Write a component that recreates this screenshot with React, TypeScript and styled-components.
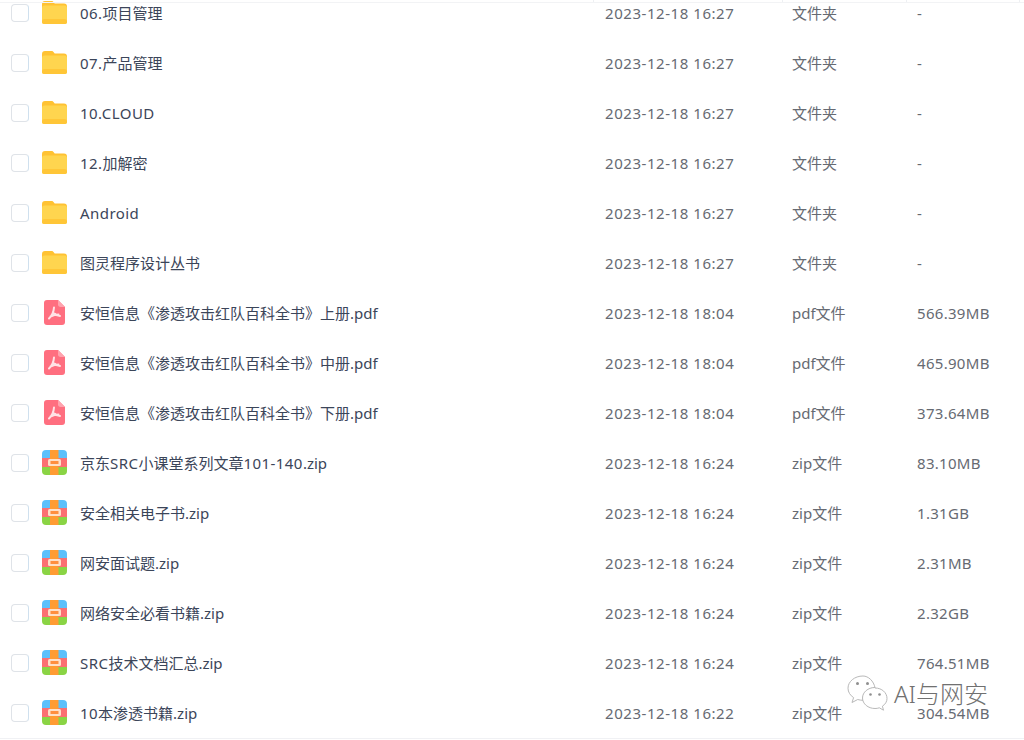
import * as React from "react";
import styled, { createGlobalStyle } from "styled-components";

interface IFileRow {
  name: string;
  date: string;
  kind: "folder" | "pdf" | "zip";
  size: string;
}

const folderDate = "2023-12-18 16:27";
const pdfDate = "2023-12-18 18:04";
const zipDate = "2023-12-18 16:24";

const files: IFileRow[] = [
  { name: "06.项目管理", date: folderDate, kind: "folder", size: "-" },
  { name: "07.产品管理", date: folderDate, kind: "folder", size: "-" },
  { name: "10.CLOUD", date: folderDate, kind: "folder", size: "-" },
  { name: "12.加解密", date: folderDate, kind: "folder", size: "-" },
  { name: "Android", date: folderDate, kind: "folder", size: "-" },
  { name: "图灵程序设计丛书", date: folderDate, kind: "folder", size: "-" },
  { name: "安恒信息《渗透攻击红队百科全书》上册.pdf", date: pdfDate, kind: "pdf", size: "566.39MB" },
  { name: "安恒信息《渗透攻击红队百科全书》中册.pdf", date: pdfDate, kind: "pdf", size: "465.90MB" },
  { name: "安恒信息《渗透攻击红队百科全书》下册.pdf", date: pdfDate, kind: "pdf", size: "373.64MB" },
  { name: "京东SRC小课堂系列文章101-140.zip", date: zipDate, kind: "zip", size: "83.10MB" },
  { name: "安全相关电子书.zip", date: zipDate, kind: "zip", size: "1.31GB" },
  { name: "网安面试题.zip", date: zipDate, kind: "zip", size: "2.31MB" },
  { name: "网络安全必看书籍.zip", date: zipDate, kind: "zip", size: "2.32GB" },
  { name: "SRC技术文档汇总.zip", date: zipDate, kind: "zip", size: "764.51MB" },
  { name: "10本渗透书籍.zip", date: "2023-12-18 16:22", kind: "zip", size: "304.54MB" }
];

const kindLabels = { folder: "文件夹", pdf: "pdf文件", zip: "zip文件" };

/// Styles

const GlobalStyle = createGlobalStyle`
  html, body {
    margin: 0;
    background: #fff;
  }
  body {
    font-family: "Noto Sans", "Noto Sans CJK SC", sans-serif;
  }
`;

const Page = styled.div`
  position: relative;
  width: 1024px;
  height: 740px;
  overflow: hidden;
  background: #fff;
`;

const HeaderEdge = styled.div`
  position: absolute;
  top: 0;
  left: 0;
  right: 0;
  height: 2px;
  border-bottom: 1px solid #f2f3f5;
  display: grid;
  grid-template-columns: 594px 189px 124px 113px 4px;
`;

const HeaderTick = styled.span`
  border-right: 1px solid #eef0f3;
`;

const FileList = styled.div`
  margin-top: -12px;
  height: 751px;
  border-bottom: 1px solid #f0f1f4;
  box-sizing: border-box;
`;

const Row = styled.div`
  display: grid;
  grid-template-columns: 42px 38px 525px 187px 125px 1fr;
  align-items: center;
  height: 50px;
  font-size: 15px;
  line-height: 20px;
`;

const CheckCell = styled.div`
  display: flex;
  justify-content: flex-end;
  padding-right: 13px;
`;

const CheckBox = styled.span`
  width: 18px;
  height: 18px;
  box-sizing: border-box;
  border: 1.5px solid #dfe3e8;
  border-right-color: #cfe0ee;
  border-radius: 4px;
  background: #fff;
`;

const IconCell = styled.div`
  display: flex;
  align-items: center;
  margin-top: -1px;
`;

const Name = styled.div`
  color: #3b4559;
  white-space: nowrap;
`;

const Latin = styled.span`
  letter-spacing: 0.45px;
`;

const Meta = styled.div`
  color: #666a72;
  white-space: nowrap;
`;

const DateText = styled(Meta)`
  letter-spacing: 0.55px;
`;

const SizeText = styled(Meta)`
  letter-spacing: 0.3px;
`;

const Watermark = styled.div`
  position: absolute;
  left: 847px;
  top: 675px;
  display: flex;
  align-items: center;
  gap: 6px;
  color: #707070;
  font-size: 24px;
  font-weight: 300;
  line-height: 34px;
`;

/// Icons

const FolderIcon = () => (
  <svg width="25" height="23" viewBox="0 0 25 23">
    <path d="M0 3C0 1 1 0 3 0h6.500c1 0 1.600.4 2.200 1.200L12.700 2.500H22c2 0 3 1 3 3V20c0 2-1 3-3 3H3c-2 0-3-1-3-3z" fill="#ffc233" />
    <rect x="0" y="4.500" width="25" height="18.500" rx="2.500" fill="#ffd54f" />
    <rect x="0" y="18" width="25" height="5" rx="2.500" fill="#ffc637" />
  </svg>
);

const PdfIcon = () => (
  <svg width="21" height="25" viewBox="0 0 21 25" style={{ marginLeft: 2 }}>
    <path d="M3 0H14L21 7V22C21 24 20 25 18 25H3C1 25 0 24 0 22V3C0 1 1 0 3 0Z" fill="#ff6f80" />
    <path d="M14 0L21 7H16.500C15 7 14 6 14 4.500Z" fill="#ffa3ae" />
    <path
      d="M10 7.500C9.800 11 8 15.500 5 18.500M10.300 13.500C11.700 15 13.500 16 16 16M6.500 16.500C9 15.200 11.500 14.500 14.500 14.500"
      fill="none"
      stroke="#ffe3e6"
      strokeWidth="2"
      strokeLinecap="round"
    />
  </svg>
);

const ZipIcon = () => (
  <svg width="25" height="25" viewBox="0 0 25 25">
    <defs>
      <clipPath id="zipClip">
        <rect x="0" y="0" width="25" height="25" rx="4" />
      </clipPath>
    </defs>
    <g clipPath="url(#zipClip)">
      <rect width="25" height="8" fill="#5cc0fb" />
      <rect y="8" width="25" height="9" fill="#fb6f72" />
      <rect y="17" width="25" height="8" fill="#8ad444" />
      <rect x="8" width="8.500" height="25" fill="#ff9c33" />
    </g>
    <rect x="6" y="9" width="13" height="7" rx="1.500" fill="#ffe0c8" />
    <rect x="8.500" y="11" width="8" height="3" fill="#ff8f40" />
  </svg>
);

const WeChatMark = () => (
  <svg width="41" height="37" viewBox="0 0 41 37" fill="none" stroke="#b9b9b9" strokeWidth="1">
    <path d="M16 1C7.700 1 1 6.500 1 13.200c0 3.900 2.200 7.200 5.600 9.400L5 27.500l5.700-3c1.700.5 3.400.8 5.300.8" fill="#fff" />
    <path d="M16 25.300c-.6-6.300 5-12.600 12-12.600-1.300-6.700-6.700-11.700-12-11.700" fill="#fff" />
    <path
      d="M28 12.500c-6.900 0-12.500 4.700-12.500 10.500S21.100 33.500 28 33.500c1.500 0 3-.2 4.300-.7l4.200 2.400-1.100-4c3-1.900 4.600-4.700 4.600-7.700 0-5.800-5.100-10.500-12-10.500z"
      fill="#fff"
    />
    <circle cx="10.500" cy="8.500" r="1.500" fill="#8f8f8f" stroke="none" />
    <circle cx="20.500" cy="8.500" r="1.500" fill="#8f8f8f" stroke="none" />
    <circle cx="23.500" cy="19.500" r="1.300" fill="#8f8f8f" stroke="none" />
    <circle cx="32.500" cy="19.500" r="1.300" fill="#8f8f8f" stroke="none" />
  </svg>
);

const iconFor = (kind: IFileRow["kind"]) => {
  if (kind === "folder") return <FolderIcon />;
  if (kind === "pdf") return <PdfIcon />;
  return <ZipIcon />;
};

// latin runs of the name read wider than the CJK ones, the extension stays tight
const renderName = (name: string) => {
  const ext = name.match(/\.(pdf|zip)$/)?.[0] ?? "";
  const base = ext ? name.slice(0, -ext.length) : name;
  return (
    <>
      {base.split(/([0-9A-Za-z.-]+)/).map((part, i) => (i % 2 === 1 ? <Latin key={i}>{part}</Latin> : part))}
      {ext}
    </>
  );
};

/// Component
export default function App() {
  return (
    <Page>
      <GlobalStyle />
      <FileList>
        {files.map((f, i) => (
          <Row key={i}>
            <CheckCell>
              <CheckBox />
            </CheckCell>
            <IconCell>{iconFor(f.kind)}</IconCell>
            <Name>{renderName(f.name)}</Name>
            <DateText>{f.date}</DateText>
            <Meta>{kindLabels[f.kind]}</Meta>
            <SizeText>{f.size}</SizeText>
          </Row>
        ))}
      </FileList>
      <HeaderEdge>
        <HeaderTick />
        <HeaderTick />
        <HeaderTick />
        <HeaderTick />
      </HeaderEdge>
      <Watermark>
        <WeChatMark />
        <span>AI与网安</span>
      </Watermark>
    </Page>
  );
}
